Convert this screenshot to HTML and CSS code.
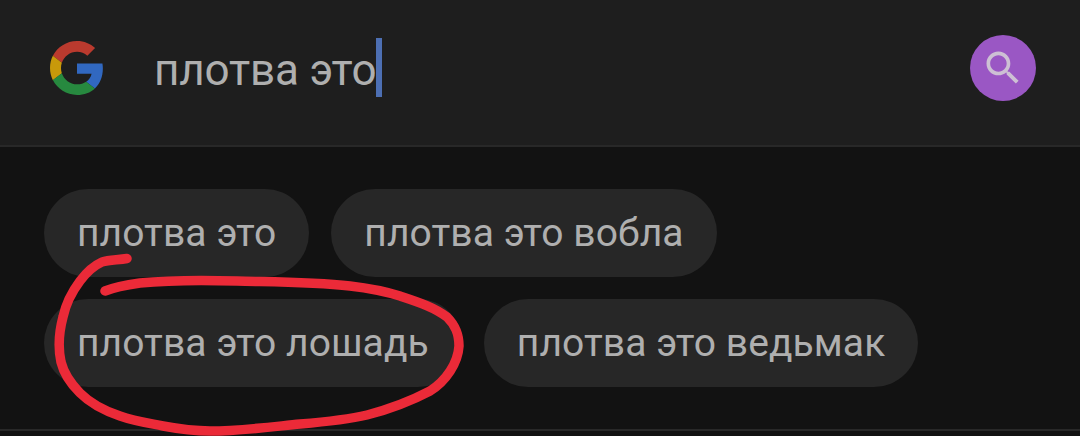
FILE: index.html
```html
<!DOCTYPE html>
<html lang="ru">
<head>
    <meta charset="UTF-8">
    <meta name="viewport" content="width=device-width, initial-scale=1.0">
    <title>плотва это</title>
    <link rel="stylesheet" href="styles.css">
</head>
<body>
    <header class="search-bar">
        <svg class="logo" viewBox="0 0 48 48" preserveAspectRatio="none">
            <path fill="#ba3a2e" d="M24 9.5c3.54 0 6.71 1.22 9.21 3.6l6.85-6.85C35.9 2.38 30.47 0 24 0 14.62 0 6.51 5.38 2.56 13.22l7.98 6.19C12.43 13.72 17.74 9.5 24 9.5z"/>
            <path fill="#3168c0" d="M46.98 24.55c0-1.57-.15-3.09-.38-4.55H24v9.02h12.94c-.58 2.96-2.26 5.48-4.78 7.18l7.73 6c4.51-4.18 7.09-10.36 7.09-17.65z"/>
            <path fill="#c8990a" d="M10.53 28.59c-.48-1.45-.76-2.99-.76-4.59s.27-3.14.76-4.59l-7.98-6.19C.92 16.46 0 20.12 0 24c0 3.88.92 7.54 2.56 10.78l7.97-6.19z"/>
            <path fill="#27893f" d="M24 48c6.48 0 11.93-2.13 15.89-5.81l-7.73-6c-2.15 1.45-4.92 2.3-8.16 2.3-6.26 0-11.57-4.22-13.47-9.91l-7.98 6.19C6.51 42.62 14.62 48 24 48z"/>
        </svg>
        <div class="query">
            <span class="query-text">плотва это</span>
            <span class="cursor"></span>
        </div>
        <button class="search-btn" aria-label="Поиск">
            <svg viewBox="0 0 24 24">
                <path d="M15.5 14h-.79l-.28-.27C15.41 12.59 16 11.11 16 9.5 16 5.91 13.09 3 9.5 3S3 5.91 3 9.5 5.91 16 9.5 16c1.61 0 3.09-.59 4.23-1.57l.27.28v.79l5 4.99L20.49 19l-4.99-5zm-6 0C7.01 14 5 11.99 5 9.5S7.01 5 9.5 5 14 7.01 14 9.5 11.99 14 9.5 14z"/>
            </svg>
        </button>
    </header>

    <main class="suggestions">
        <div class="chip-row">
            <a class="chip">плотва это</a>
            <a class="chip">плотва это вобла</a>
        </div>
        <div class="chip-row">
            <a class="chip">плотва это лошадь</a>
            <a class="chip">плотва это ведьмак</a>
        </div>
    </main>
    <div class="bottom"></div>

    <!-- red marker circle -->
    <svg class="marker" viewBox="0 0 1080 436">
        <path d="M127 258.500C118 260 109 260 102 262C93 266 86 273 80 281C71 293 66 303 63 317C59 332 58 348 61 362C64 374 70 383 80 393C91 404 105 411 120 416C134 421 148 423 163 426C179 429 195 431 210 431C240 431 270 427 300 424C324 422 346 420 367 415C390 409 411 401 430 391C446 381 458 363 459 346C459 333 455 325 447 317C434 307 418 302 400 296C384 291 367 288 350 286C314 282 276 282 237 281C205 280 170 280 140 283C126 285 115 287 105 291"/>
    </svg>
</body>
</html>
```
FILE: styles.css
```css
* {
    box-sizing: border-box;
}

body {
    margin: 0;
    height: 436px;
    overflow: hidden;
    display: flex;
    flex-direction: column;
    font-family: Roboto, sans-serif;
    color: #afafaf;
    background-color: #121212;
}

.search-bar {
    display: flex;
    align-items: flex-start;
    height: 147px;
    padding: 35px 44px 0 50px;
    background-color: #1e1e1e;
    border-bottom: 2px solid #282828;
}

.logo {
    width: 54px;
    height: 54px;
    margin-top: 6px;
}

.query {
    display: flex;
    flex: 1;
    height: 59px;
    margin: 3px 0 0 50px;
    font-size: 44px;
    line-height: 59px;
    letter-spacing: -0.15px;
}

.query-text {
    padding-top: 3px;
}

.cursor {
    width: 6px;
    height: 59px;
    background-color: #4d6fb3;
}

.search-btn {
    display: flex;
    align-items: center;
    justify-content: center;
    width: 66px;
    height: 66px;
    padding: 0;
    border: none;
    border-radius: 50%;
    background-color: #9a57c4;
}

.search-btn svg {
    width: 44px;
    height: 44px;
    fill: #cdc0d4;
}

.suggestions {
    display: flex;
    flex-direction: column;
    gap: 22px;
    height: 282px;
    padding: 42px 44px 0;
}

.chip-row {
    display: flex;
    gap: 22px;
}

.chip {
    height: 88px;
    padding: 0 33px;
    border-radius: 44px;
    font-size: 39px;
    line-height: 88px;
    letter-spacing: 0.08px;
    white-space: nowrap;
    background-color: #272727;
}

.bottom {
    flex: 1;
    border-top: 2px solid #282828;
}

.marker {
    position: absolute;
    top: 0;
    left: 0;
    width: 1080px;
    height: 436px;
    fill: none;
    stroke: #eb2a38;
    stroke-width: 9.5;
    stroke-linecap: round;
    stroke-linejoin: round;
    pointer-events: none;
}
```
